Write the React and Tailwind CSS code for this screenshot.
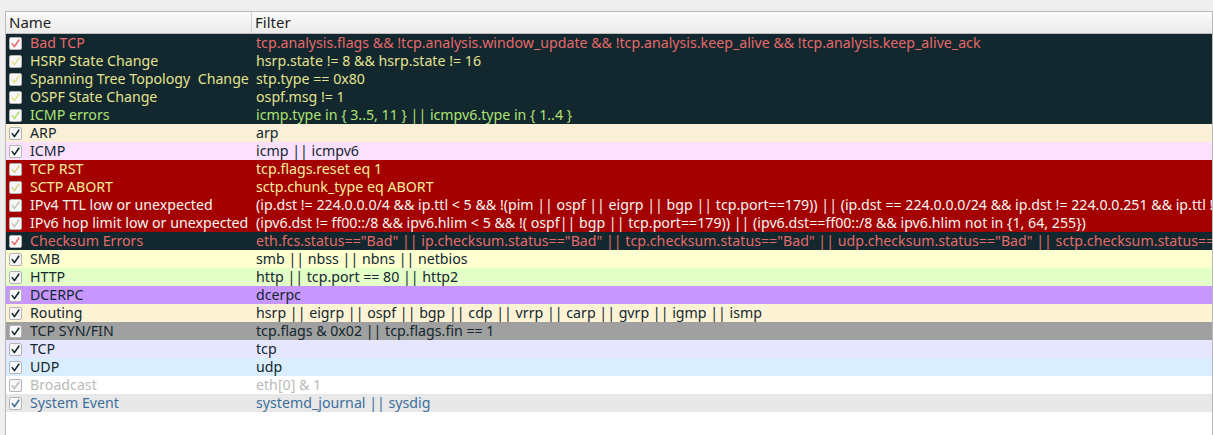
const rules = [
  { name: 'Bad TCP', filter: 'tcp.analysis.flags && !tcp.analysis.window_update && !tcp.analysis.keep_alive && !tcp.analysis.keep_alive_ack', bg: 'bg-[#12272e]', fg: 'text-[#e56a6a]' },
  { name: 'HSRP State Change', filter: 'hsrp.state != 8 && hsrp.state != 16', bg: 'bg-[#12272e]', fg: 'text-[#e3e38e]' },
  { name: 'Spanning Tree Topology  Change', filter: 'stp.type == 0x80', bg: 'bg-[#12272e]', fg: 'text-[#e3e38e]' },
  { name: 'OSPF State Change', filter: 'ospf.msg != 1', bg: 'bg-[#12272e]', fg: 'text-[#e3e38e]' },
  { name: 'ICMP errors', filter: 'icmp.type in { 3..5, 11 } || icmpv6.type in { 1..4 }', bg: 'bg-[#12272e]', fg: 'text-[#aee274]' },
  { name: 'ARP', filter: 'arp', bg: 'bg-[#faf0d7]', fg: 'text-[#12272e]' },
  { name: 'ICMP', filter: 'icmp || icmpv6', bg: 'bg-[#fce0ff]', fg: 'text-[#12272e]' },
  { name: 'TCP RST', filter: 'tcp.flags.reset eq 1', bg: 'bg-[#a40000]', fg: 'text-[#f5ef9c]', check: 'text-[#d8d28a]' },
  { name: 'SCTP ABORT', filter: 'sctp.chunk_type eq ABORT', bg: 'bg-[#a40000]', fg: 'text-[#f5ef9c]', check: 'text-[#d8d28a]' },
  { name: 'IPv4 TTL low or unexpected', filter: '(ip.dst != 224.0.0.0/4 && ip.ttl < 5 && !(pim || ospf || eigrp || bgp || tcp.port==179)) || (ip.dst == 224.0.0.0/24 && ip.dst != 224.0.0.251 && ip.ttl != 1 && !(vrrp || carp))', bg: 'bg-[#a40000]', fg: 'text-[#f5f5f2]', check: 'text-[#c4c4c4]' },
  { name: 'IPv6 hop limit low or unexpected', filter: '(ipv6.dst != ff00::/8 && ipv6.hlim < 5 && !( ospf|| bgp || tcp.port==179)) || (ipv6.dst==ff00::/8 && ipv6.hlim not in {1, 64, 255})', bg: 'bg-[#a40000]', fg: 'text-[#f5f5f2]', check: 'text-[#c4c4c4]' },
  { name: 'Checksum Errors', filter: 'eth.fcs.status=="Bad" || ip.checksum.status=="Bad" || tcp.checksum.status=="Bad" || udp.checksum.status=="Bad" || sctp.checksum.status=="Bad" || mstp.checksum.status=="Bad" || cdp.checksum.status=="Bad"', bg: 'bg-[#12272e]', fg: 'text-[#e56a6a]' },
  { name: 'SMB', filter: 'smb || nbss || nbns || netbios', bg: 'bg-[#feffd0]', fg: 'text-[#12272e]' },
  { name: 'HTTP', filter: 'http || tcp.port == 80 || http2', bg: 'bg-[#e4ffc7]', fg: 'text-[#12272e]' },
  { name: 'DCERPC', filter: 'dcerpc', bg: 'bg-[#c797ff]', fg: 'text-[#12272e]' },
  { name: 'Routing', filter: 'hsrp || eigrp || ospf || bgp || cdp || vrrp || carp || gvrp || igmp || ismp', bg: 'bg-[#fff3d6]', fg: 'text-[#12272e]' },
  { name: 'TCP SYN/FIN', filter: 'tcp.flags & 0x02 || tcp.flags.fin == 1', bg: 'bg-[#a0a0a0]', fg: 'text-[#12272e]' },
  { name: 'TCP', filter: 'tcp', bg: 'bg-[#e7e6ff]', fg: 'text-[#12272e]' },
  { name: 'UDP', filter: 'udp', bg: 'bg-[#daeeff]', fg: 'text-[#12272e]' },
  { name: 'Broadcast', filter: 'eth[0] & 1', bg: 'bg-white', fg: 'text-[#b9bcb5]' },
  { name: 'System Event', filter: 'systemd_journal || sysdig', bg: 'bg-[#e8e8e8]', fg: 'text-[#3b6e9c]' },
];

const Check = ({ className = '' }) => (
  <span className={`w-[13px] h-[13px] shrink-0 border border-[#b4b4b4] bg-[#f8f8f8] rounded-[2px] flex items-center justify-center ${className}`}>
    <svg width="9" height="9" viewBox="0 0 9 9" fill="none">
      <path d="M1.2 4.6 L3.4 7.6 L7.8 1.2" stroke="currentColor" strokeWidth="1.6" strokeLinecap="round" strokeLinejoin="round" />
    </svg>
  </span>
);

export default function App() {
  return (
    <div className="w-[1213px] h-[435px] bg-[#efefef] pt-[11px] pl-[5px] overflow-hidden" style={{ fontFamily: '"Noto Sans", "Open Sans", sans-serif' }}>
      <div className="w-[1208px] h-[440px] border border-[#b9b9b9] bg-white overflow-hidden">
        {/* header */}
        <div className="flex h-[22px] border-b border-[#bdbdbd] bg-gradient-to-b from-[#fbfbfb] to-[#ebebeb] text-[15px] text-[#1e1e1e]">
          <div className="w-[246px] shrink-0 border-r border-[#d2d2d2] pl-[3px] flex items-center">Name</div>
          <div className="flex-1 pl-[3px] flex items-center">Filter</div>
        </div>
        {/* rows */}
        {rules.map((r) => (
          <div key={r.name} className={`flex h-[18px] items-center text-[14.2px] leading-[18px] ${r.bg} ${r.fg}`}>
            <div className="w-[247px] shrink-0 flex items-center gap-[8px] pl-[3px] whitespace-pre overflow-hidden">
              <Check className={r.check || ''} />
              <span>{r.name}</span>
            </div>
            <div className="flex-1 pl-[3px] whitespace-pre overflow-hidden">{r.filter}</div>
          </div>
        ))}
      </div>
    </div>
  );
}
